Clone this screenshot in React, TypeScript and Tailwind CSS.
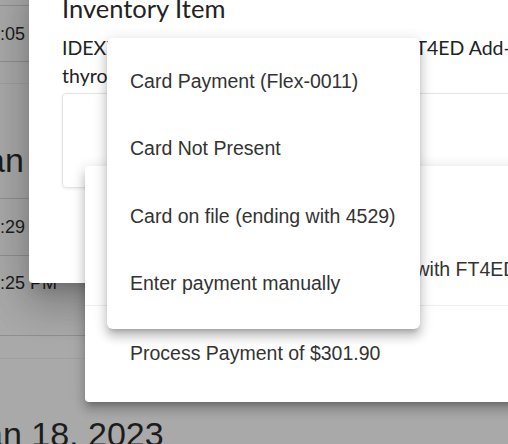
import React from 'react'

const menuItems = [
  'Card Payment (Flex-0011)',
  'Card Not Present',
  'Card on file (ending with 4529)',
  'Enter payment manually',
]

const elevation8 =
  'shadow-[0_5px_5px_-3px_rgba(0,0,0,0.2),0_8px_10px_1px_rgba(0,0,0,0.14),0_3px_14px_2px_rgba(0,0,0,0.12)]'

export default function App() {
  return (
    <div className="relative h-[444px] w-[508px] overflow-hidden bg-[#a9a9a9] font-['Liberation_Sans',Arial,sans-serif] text-[#1c1c1c]">
      {/* page behind the backdrop */}
      <div className="flex flex-col">
        <div className="h-[6px] border-b border-[#8f8f8f]" />
        <div className="flex h-[56px] items-center border-b border-[#8f8f8f]">
          <span className="ml-[-20px] whitespace-nowrap text-[18px] leading-none">12:05 PM</span>
        </div>
        <div className="h-[22px] border-b border-[#a0a0a0]" />
        <div className="h-[115px] border-b border-[#8f8f8f] pt-[59px]">
          <h2 className="ml-[-31px] whitespace-nowrap text-[34px] leading-none">Jan 19, 2023</h2>
        </div>
        <div className="flex h-[57px] items-center border-b border-[#8f8f8f]">
          <span className="ml-[-20px] whitespace-nowrap text-[18px] leading-none">12:29 PM</span>
        </div>
        <div className="h-[80px] border-b border-[#8f8f8f] pt-[18px]">
          <span className="ml-[-20px] block whitespace-nowrap text-[18px] leading-none">12:25 PM</span>
        </div>
        <div className="h-[23px] border-b border-[#a0a0a0]" />
        <div className="pt-[58px]">
          <h2 className="ml-[-33px] whitespace-nowrap text-[34px] leading-none">Jan 18, 2023</h2>
        </div>
      </div>

      {/* inventory item dialog */}
      <div className="absolute left-[29px] top-[-24px] h-[307px] w-[700px] rounded-[4px] bg-white pl-[33px] pt-[18px] font-['Lato',sans-serif] text-[#222] shadow-[0_11px_15px_-7px_rgba(0,0,0,0.2),0_24px_38px_3px_rgba(0,0,0,0.14),0_9px_46px_8px_rgba(0,0,0,0.12)]">
        <h1 className="text-[25.5px] leading-[28px]">Inventory Item</h1>
        <p className="mt-[12px] w-[640px] text-[19.5px] leading-[28px]">
          IDEXX Total T4, Canine, Thyroid Profile, FT4ED Add-on, free T4 by ED
          thyroid-stimulating hormone
        </p>
        <div className="mt-[3px] h-[95px] rounded-[4px] border border-[#e4e4e4] shadow-[0_1px_3px_rgba(0,0,0,0.08)]" />
      </div>

      {/* payment sheet */}
      <div className={`absolute left-[85px] top-[166px] flex h-[236px] w-[700px] flex-col rounded-[4px] bg-white text-[19.5px] text-[#333] ${elevation8}`}>
        <div className="h-[140px] border-b border-[#eeeeee] pl-[49px] pt-[89px]">
          <span className="whitespace-nowrap leading-[24px]">Charge card on file for T4 Panel with FT4ED Add-on</span>
        </div>
        <div className="flex flex-1 items-center pl-[45px]">
          <span className="whitespace-nowrap">Process Payment of $301.90</span>
        </div>
      </div>

      {/* payment method menu */}
      <ul className={`absolute left-[107px] top-[38px] w-[313px] rounded-[6px] bg-white pb-[12px] pt-[10px] text-[19.5px] text-[#333] ${elevation8}`}>
        {menuItems.map((item) => (
          <li key={item} className="flex h-[67.3px] items-center whitespace-nowrap pl-[23px]">
            {item}
          </li>
        ))}
      </ul>
    </div>
  )
}
